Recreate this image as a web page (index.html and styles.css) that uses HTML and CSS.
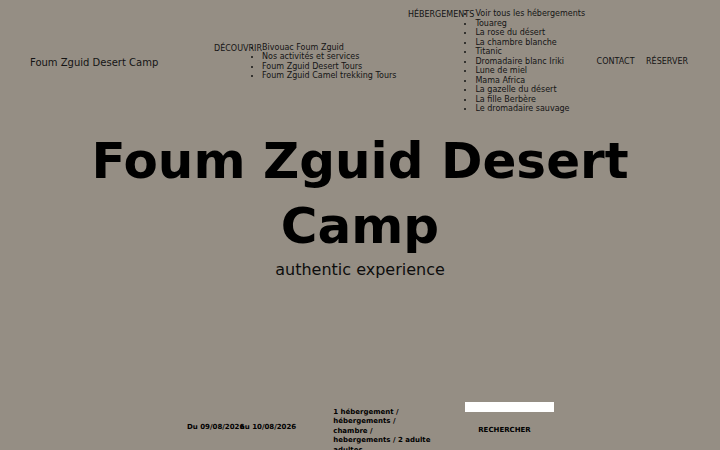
FILE: index.html
```html
<!DOCTYPE html>
<html lang="fr">
<head>
<meta charset="utf-8">
<title>Foum Zguid Desert Camp</title>
<link rel="stylesheet" href="styles.css">
</head>
<body>
<header class="site-header">
  <a class="logo" href="#">Foum Zguid Desert Camp</a>
  <nav class="main-nav">
    <ul class="menu">
      <li class="menu-item has-sub">
        <a class="menu-label label-decouvrir" href="#">DÉCOUVRIR</a>
        <ul class="sub-menu">
          <li>Bivouac Foum Zguid</li>
          <li>Nos activités et services</li>
          <li>Foum Zguid Desert Tours</li>
          <li>Foum Zguid Camel trekking Tours</li>
        </ul>
      </li>
      <li class="menu-item has-sub">
        <a class="menu-label label-heberg" href="#">HÉBERGEMENTS</a>
        <ul class="sub-menu">
          <li>Voir tous les hébergements</li>
          <li>Touareg</li>
          <li>La rose du désert</li>
          <li>La chambre blanche</li>
          <li>Titanic</li>
          <li>Dromadaire blanc Iriki</li>
          <li>Lune de miel</li>
          <li>Mama Africa</li>
          <li>La gazelle du désert</li>
          <li>La fille Berbère</li>
          <li>Le dromadaire sauvage</li>
        </ul>
      </li>
      <li class="menu-item"><a class="menu-label" href="#">CONTACT</a></li>
      <li class="menu-item"><a class="menu-label" href="#">RÉSERVER</a></li>
    </ul>
  </nav>
</header>

<section class="hero">
  <h1 class="hero-title">Foum Zguid Desert Camp</h1>
  <p class="hero-subtitle">authentic experience</p>
</section>

<form class="booking">
  <div class="field dates">
    <span class="date-from">Du 09/08/2026</span>
    <span class="date-to">au 10/08/2026</span>
  </div>
  <div class="field guests">1 hébergement / hébergements / chambre / hebergements / 2 adulte adultes</div>
  <div class="field search">
    <div class="search-input"></div>
    <button class="search-btn" type="button">RECHERCHER</button>
  </div>
</form>
</body>
</html>
```

FILE: styles.css
```css
html, body {
  margin: 0;
  padding: 0;
}

body {
  width: 720px;
  height: 450px;
  overflow: hidden;
  background: #958e84;
  color: #111;
  font-family: "DejaVu Sans", sans-serif;
}

a {
  color: inherit;
  text-decoration: none;
}

.site-header {
  display: flex;
  align-items: center;
  justify-content: space-between;
  padding: 9px 32px 7px 30px;
}

.logo {
  padding-top: 3px;
  font-size: 10px;
  line-height: 1.164;
  color: #141414;
}

.menu {
  display: flex;
  align-items: center;
  gap: 11.5px;
  margin: 0;
  padding: 0;
  list-style: none;
}

.menu-item {
  display: flex;
  align-items: flex-start;
  font-size: 8px;
}

.menu-item.has-sub:first-child {
  padding-top: 1px;
}

.menu-label {
  display: block;
  font-size: 8px;
  line-height: 1.164;
  padding-top: 1.3px;
  white-space: nowrap;
  color: #141414;
}

.label-decouvrir {
  width: 48px;
}

.label-heberg {
  width: 67.5px;
}

.sub-menu {
  margin: 0;
  padding: 0;
  list-style: disc outside;
  font-size: 8px;
  line-height: 9.5px;
  color: #141414;
  white-space: nowrap;
}

.hero {
  padding: 0 40px;
  text-align: center;
  color: #000;
}

.hero-title {
  margin: 8px 0 0;
  font-size: 50px;
  font-weight: 700;
  line-height: 65px;
}

.hero-subtitle {
  margin: 2px 0 0;
  font-size: 16px;
  line-height: 1.164;
  color: #0d0d0d;
}

.booking {
  display: flex;
  align-items: flex-start;
  margin-top: 123px;
  padding-left: 187px;
  font-size: 7px;
  font-weight: 700;
  color: #000;
}

.dates {
  display: flex;
  margin-top: 21px;
  line-height: 8px;
  white-space: nowrap;
}

.date-from {
  width: 53px;
}

.guests {
  width: 98px;
  margin-left: 37px;
  margin-top: 5.5px;
  line-height: 9.6px;
}

.search {
  display: flex;
  flex-direction: column;
  align-items: flex-start;
  margin-left: 34px;
}

.search-input {
  width: 89px;
  height: 9.5px;
  background: #fff;
}

.search-btn {
  margin: 0;
  padding: 14px 13px;
  border: 0;
  background: transparent;
  font-family: "DejaVu Sans", sans-serif;
  font-size: 7px;
  font-weight: 700;
  line-height: 8px;
  color: #000;
  letter-spacing: 0;
}
```
